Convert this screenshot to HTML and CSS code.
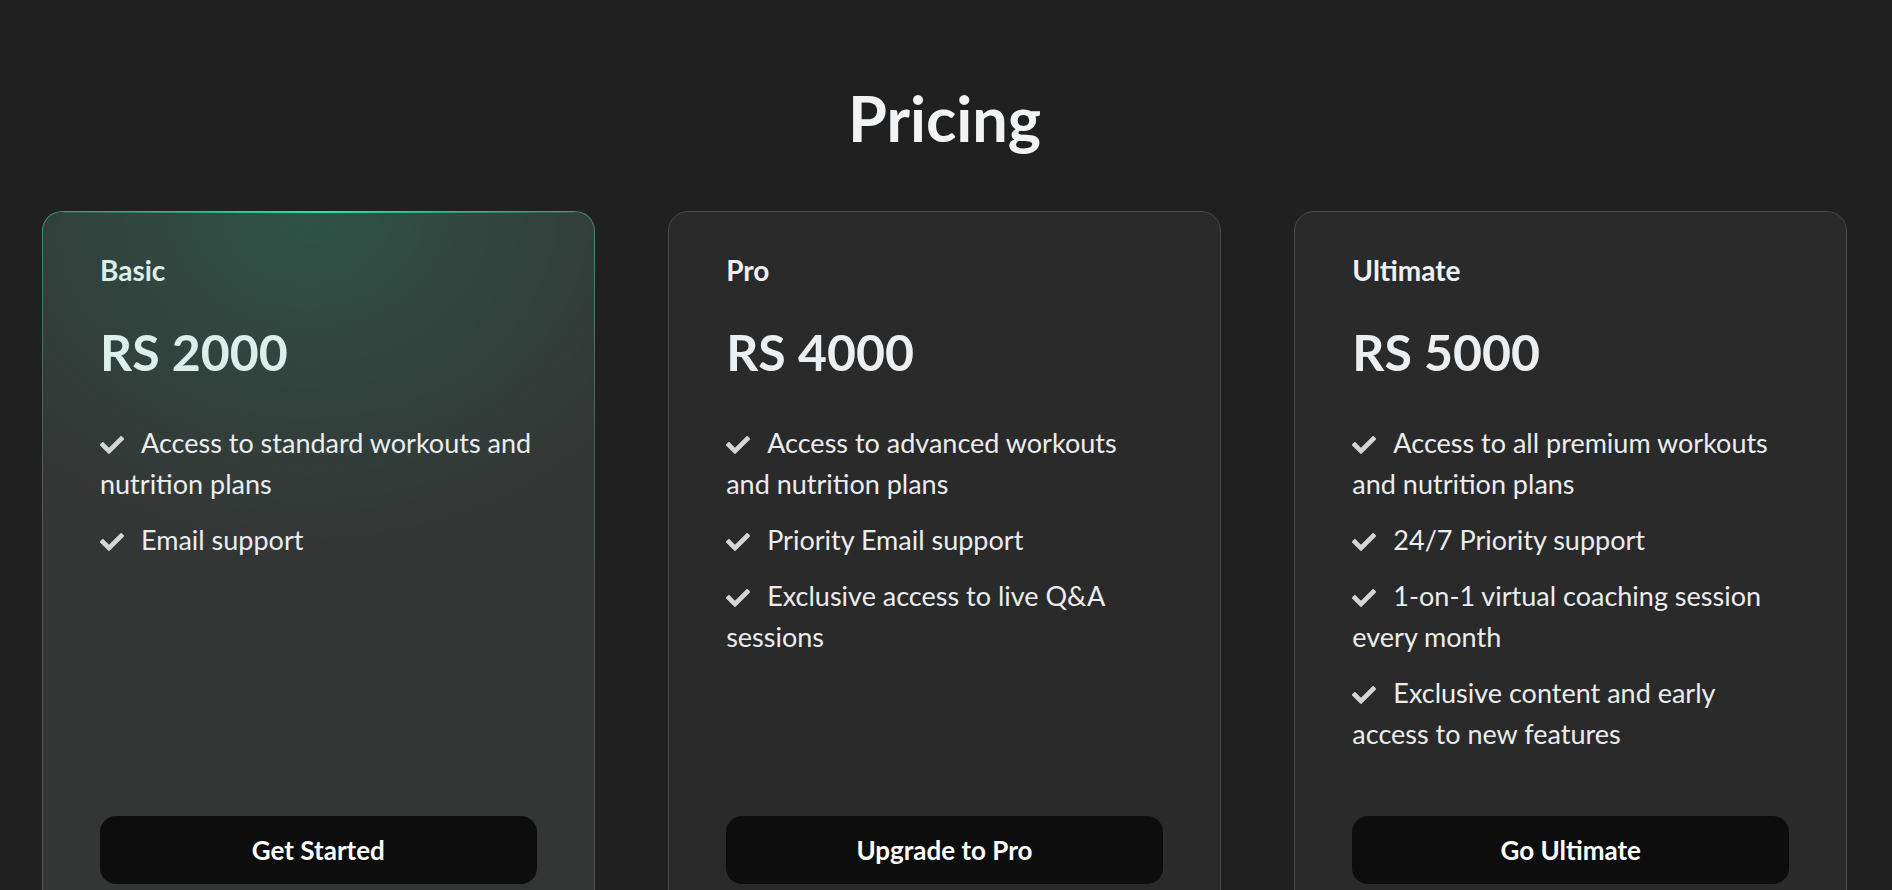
FILE: index.html
```html
<!DOCTYPE html>
<html lang="en">
<head>
<meta charset="utf-8">
<title>Pricing</title>
<link rel="stylesheet" href="styles.css">
</head>
<body>
<section class="pricing">
  <h1 class="pricing-title">Pricing</h1>
  <div class="plans">
    <div class="plan plan-featured">
      <h3 class="plan-name">Basic</h3>
      <div class="plan-price">RS 2000</div>
      <ul class="plan-features">
        <li><svg class="check" viewBox="0 0 512 512"><path d="M173.898 439.404l-166.4-166.4c-9.997-9.997-9.997-26.206 0-36.204l36.203-36.204c9.997-9.998 26.207-9.998 36.204 0L192 312.69 432.095 72.596c9.997-9.997 26.207-9.997 36.204 0l36.203 36.204c9.997 9.997 9.997 26.206 0 36.204l-294.4 294.401c-9.998 9.997-26.207 9.997-36.204-.001z"/></svg>Access to standard workouts and nutrition plans</li>
        <li><svg class="check" viewBox="0 0 512 512"><path d="M173.898 439.404l-166.4-166.4c-9.997-9.997-9.997-26.206 0-36.204l36.203-36.204c9.997-9.998 26.207-9.998 36.204 0L192 312.69 432.095 72.596c9.997-9.997 26.207-9.997 36.204 0l36.203 36.204c9.997 9.997 9.997 26.206 0 36.204l-294.4 294.401c-9.998 9.997-26.207 9.997-36.204-.001z"/></svg>Email support</li>
      </ul>
      <button class="plan-btn">Get Started</button>
    </div>
    <div class="plan">
      <h3 class="plan-name">Pro</h3>
      <div class="plan-price">RS 4000</div>
      <ul class="plan-features">
        <li><svg class="check" viewBox="0 0 512 512"><path d="M173.898 439.404l-166.4-166.4c-9.997-9.997-9.997-26.206 0-36.204l36.203-36.204c9.997-9.998 26.207-9.998 36.204 0L192 312.69 432.095 72.596c9.997-9.997 26.207-9.997 36.204 0l36.203 36.204c9.997 9.997 9.997 26.206 0 36.204l-294.4 294.401c-9.998 9.997-26.207 9.997-36.204-.001z"/></svg>Access to advanced workouts and nutrition plans</li>
        <li><svg class="check" viewBox="0 0 512 512"><path d="M173.898 439.404l-166.4-166.4c-9.997-9.997-9.997-26.206 0-36.204l36.203-36.204c9.997-9.998 26.207-9.998 36.204 0L192 312.69 432.095 72.596c9.997-9.997 26.207-9.997 36.204 0l36.203 36.204c9.997 9.997 9.997 26.206 0 36.204l-294.4 294.401c-9.998 9.997-26.207 9.997-36.204-.001z"/></svg>Priority Email support</li>
        <li><svg class="check" viewBox="0 0 512 512"><path d="M173.898 439.404l-166.4-166.4c-9.997-9.997-9.997-26.206 0-36.204l36.203-36.204c9.997-9.998 26.207-9.998 36.204 0L192 312.69 432.095 72.596c9.997-9.997 26.207-9.997 36.204 0l36.203 36.204c9.997 9.997 9.997 26.206 0 36.204l-294.4 294.401c-9.998 9.997-26.207 9.997-36.204-.001z"/></svg>Exclusive access to live Q&amp;A sessions</li>
      </ul>
      <button class="plan-btn">Upgrade to Pro</button>
    </div>
    <div class="plan">
      <h3 class="plan-name">Ultimate</h3>
      <div class="plan-price">RS 5000</div>
      <ul class="plan-features">
        <li><svg class="check" viewBox="0 0 512 512"><path d="M173.898 439.404l-166.4-166.4c-9.997-9.997-9.997-26.206 0-36.204l36.203-36.204c9.997-9.998 26.207-9.998 36.204 0L192 312.69 432.095 72.596c9.997-9.997 26.207-9.997 36.204 0l36.203 36.204c9.997 9.997 9.997 26.206 0 36.204l-294.4 294.401c-9.998 9.997-26.207 9.997-36.204-.001z"/></svg>Access to all premium workouts and nutrition plans</li>
        <li><svg class="check" viewBox="0 0 512 512"><path d="M173.898 439.404l-166.4-166.4c-9.997-9.997-9.997-26.206 0-36.204l36.203-36.204c9.997-9.998 26.207-9.998 36.204 0L192 312.69 432.095 72.596c9.997-9.997 26.207-9.997 36.204 0l36.203 36.204c9.997 9.997 9.997 26.206 0 36.204l-294.4 294.401c-9.998 9.997-26.207 9.997-36.204-.001z"/></svg>24/7 Priority support</li>
        <li><svg class="check" viewBox="0 0 512 512"><path d="M173.898 439.404l-166.4-166.4c-9.997-9.997-9.997-26.206 0-36.204l36.203-36.204c9.997-9.998 26.207-9.998 36.204 0L192 312.69 432.095 72.596c9.997-9.997 26.207-9.997 36.204 0l36.203 36.204c9.997 9.997 9.997 26.206 0 36.204l-294.4 294.401c-9.998 9.997-26.207 9.997-36.204-.001z"/></svg>1-on-1 virtual coaching session every month</li>
        <li><svg class="check" viewBox="0 0 512 512"><path d="M173.898 439.404l-166.4-166.4c-9.997-9.997-9.997-26.206 0-36.204l36.203-36.204c9.997-9.998 26.207-9.998 36.204 0L192 312.69 432.095 72.596c9.997-9.997 26.207-9.997 36.204 0l36.203 36.204c9.997 9.997 9.997 26.206 0 36.204l-294.4 294.401c-9.998 9.997-26.207 9.997-36.204-.001z"/></svg>Exclusive content and early access to new features</li>
      </ul>
      <button class="plan-btn">Go Ultimate</button>
    </div>
  </div>
</section>
</body>
</html>
```
FILE: styles.css
```css
* { box-sizing: border-box; }
html, body {
  margin: 0;
  background: #202020;
}
body {
  font-family: "Lato", "Liberation Sans", sans-serif;
  color: #eceff2;
}
.pricing {
  padding: 80px 45px 0 42px;
}
.pricing-title {
  margin: 0 0 55px;
  text-align: center;
  font-size: 63px;
  line-height: 1.2;
  font-weight: 700;
  color: #f1f3f5;
}
.plans {
  display: grid;
  grid-template-columns: repeat(3, 1fr);
  column-gap: 73.5px;
  align-items: stretch;
}
.plan {
  position: relative;
  display: flex;
  flex-direction: column;
  background: #2a2a2a;
  border: 1px solid #4a4a4a;
  border-radius: 20px;
  padding: 42px 57px 40px;
}
.plan-featured {
  border-color: transparent;
  background:
    radial-gradient(ellipse 75% 48% at 48% 0%, rgba(40, 115, 90, 0.48), rgba(40, 115, 90, 0) 100%) padding-box,
    linear-gradient(#343535, #343535) padding-box,
    linear-gradient(to bottom, #3f8f77 0%, #4d5d59 30%, #555 60%) border-box;
}
.plan-featured::before {
  content: "";
  position: absolute;
  top: -1px;
  left: 20px;
  right: 20px;
  height: 2px;
  background: linear-gradient(to right, rgba(30, 220, 165, 0.15), #1ee6ad 50%, rgba(30, 220, 165, 0.15));
  border-radius: 2px;
}
.plan-name {
  margin: 0;
  font-size: 28px;
  line-height: 1.2;
  font-weight: 700;
  color: #eef1f4;
}
.plan-featured .plan-name,
.plan-featured .plan-price {
  color: #dcefea;
}
.plan-price {
  margin-top: 35px;
  font-size: 50px;
  line-height: 1.2;
  font-weight: 700;
  color: #eceff2;
}
.plan-features {
  list-style: none;
  margin: 40px 0 0;
  padding: 0;
  flex: 1;
  font-size: 27px;
  line-height: 41px;
  color: #eaedf0;
}
.plan-features li {
  margin-bottom: 15px;
}
.check {
  width: 24px;
  height: 24px;
  fill: #d6d6d6;
  vertical-align: -4px;
  margin-right: 17px;
}
.plan-btn {
  margin-top: 47px;
  width: 100%;
  height: 68px;
  border: none;
  border-radius: 16px;
  background: #0d0d0d;
  color: #ffffff;
  font-family: "Lato", "Liberation Sans", sans-serif;
  font-size: 26px;
  font-weight: 700;
  cursor: pointer;
}
```
